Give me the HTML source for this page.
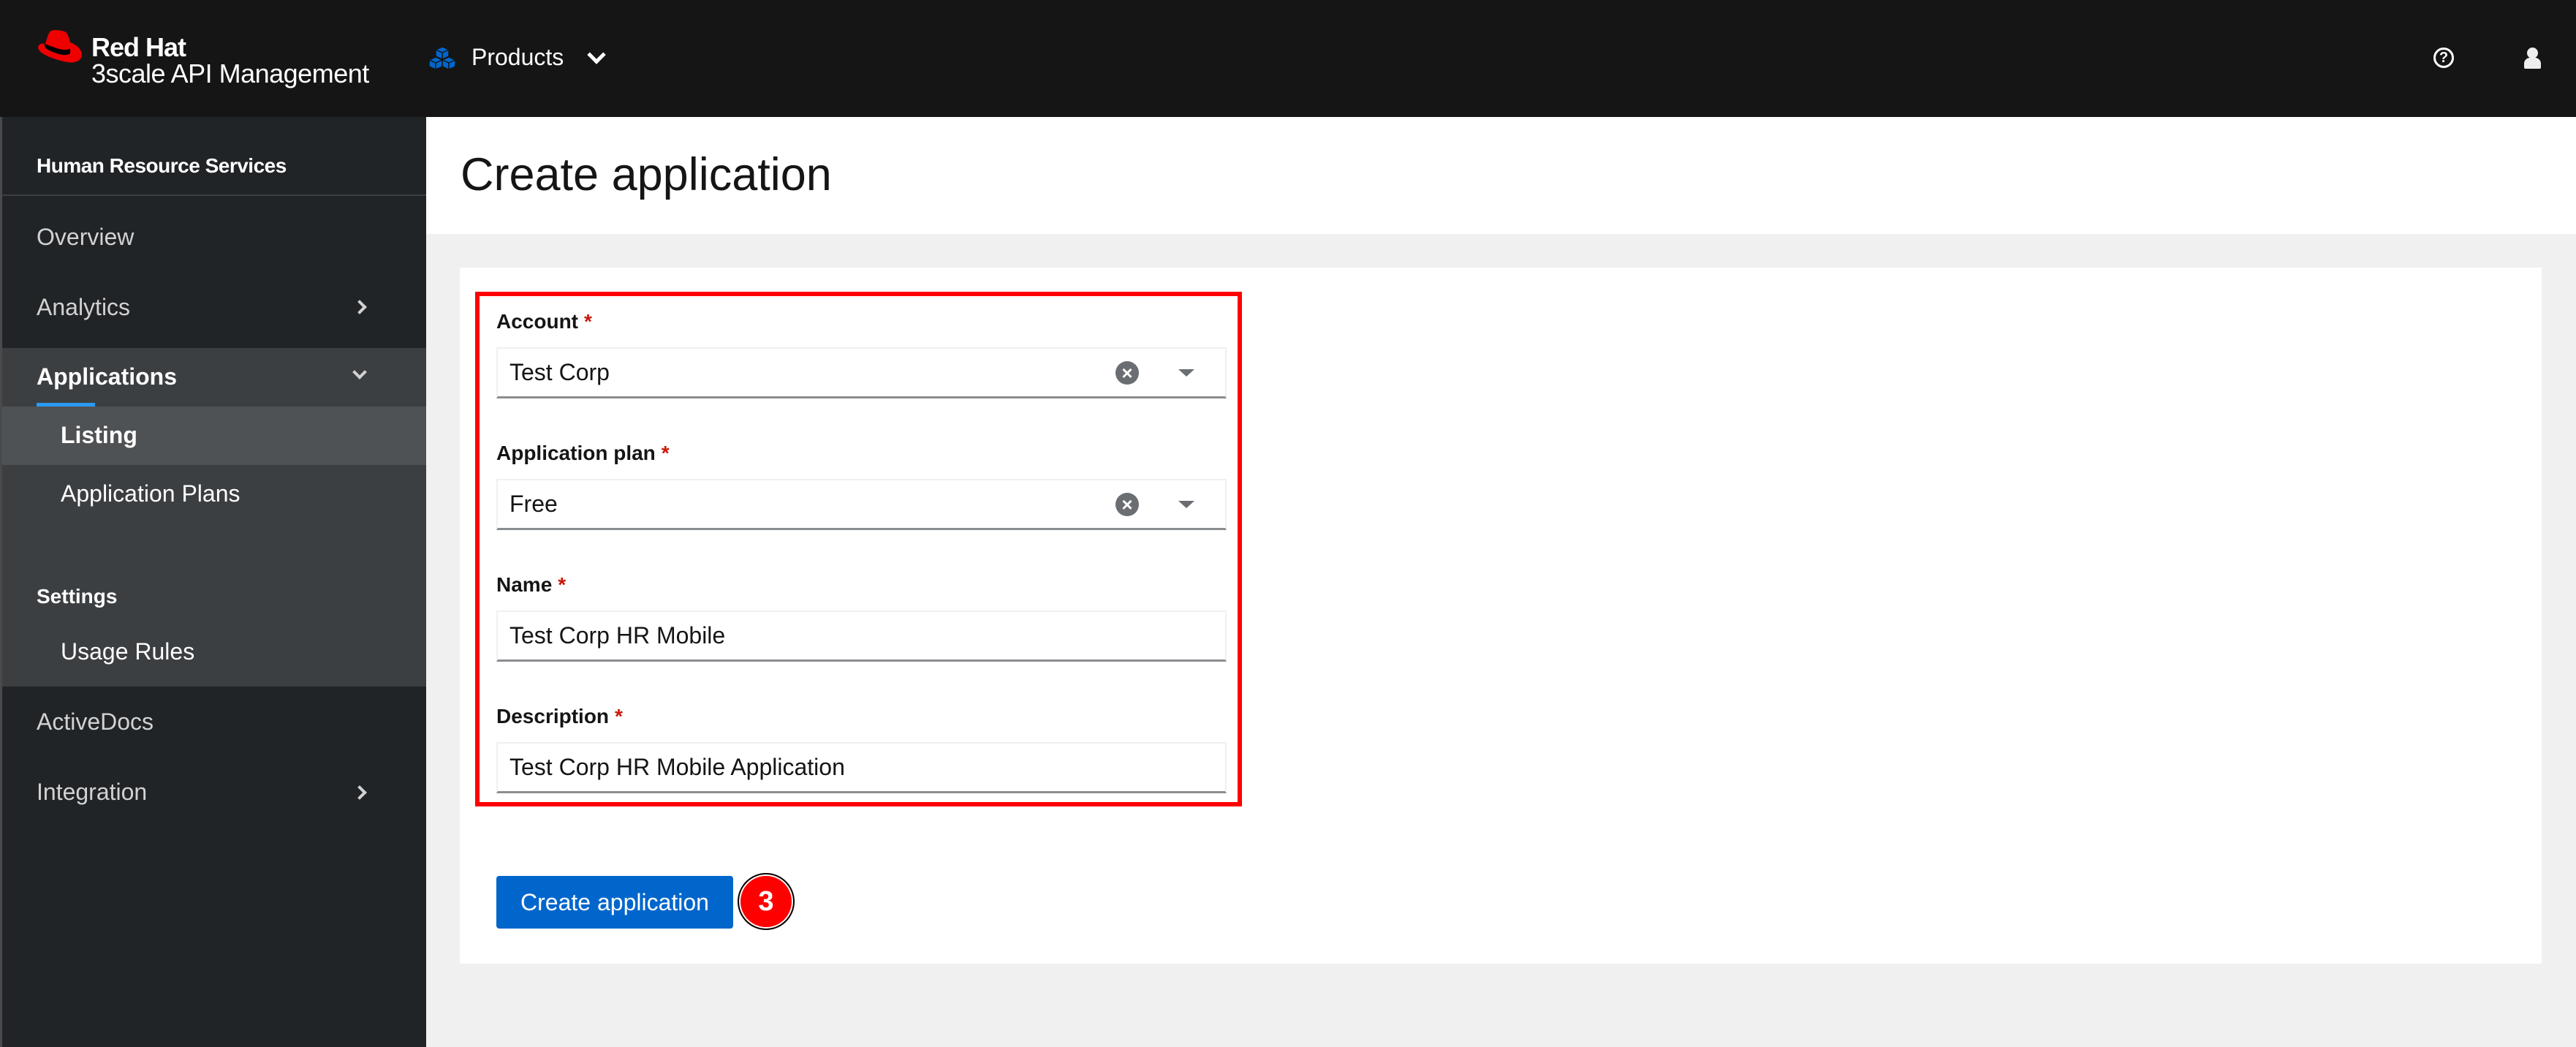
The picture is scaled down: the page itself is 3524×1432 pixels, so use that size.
<!DOCTYPE html>
<html><head><meta charset="utf-8"><style>
*{box-sizing:border-box;margin:0;padding:0}
body{width:3524px;height:1432px;overflow:hidden;background:#f0f0f0;font-family:"Liberation Sans",sans-serif;position:relative}
.a{position:absolute}
#hdr{left:0;top:0;width:3524px;height:160px;background:#151515}
#side{left:0;top:160px;width:583px;height:1272px;background:#212427;border-left:3px solid #4a4a4a}
.st{color:#d2d2d2;font-size:32px;left:50px}
.chev{left:490px;width:14px;height:14px;border-right:4px solid #d2d2d2;border-bottom:4px solid #d2d2d2}
.lbl{left:679px;font-size:28px;font-weight:bold;color:#151515}
.lbl span{color:#c9190b;margin-left:8px}
.inp{left:679px;width:999px;height:70px;border:2px solid #f0f0f0;border-bottom:3px solid #8a8d90;background:#fff;font-size:32px;color:#151515;padding-left:16px;line-height:64px}
.x{left:1526px;width:32px;height:32px;border-radius:50%;background:#6a6e73;color:#fff;font-size:26px;font-weight:bold;text-align:center;line-height:32px}
.car{left:1612px;width:0;height:0;border-left:11px solid transparent;border-right:11px solid transparent;border-top:10px solid #6a6e73}
</style></head><body>
<div id="hdr" class="a">
<svg class="a" style="left:50px;top:40px" width="64" height="48" viewBox="0 0 64 48">
<path d="M20 2 C26 0 34 2 38 3 C42 4 44 10 46 18 C52 20 62 26 62 35 C62 43 52 47 42 45 C30 43 8 36 3 28 C0 22 6 18 12 20 C14 14 16 4 20 2Z" fill="#e00"/>
<path d="M11 20 C10 24 12 27 22 31 C32 35 42 37 46 33 L46 26 C42 30 32 28 22 24 C16 22 12 20 11 20Z" fill="#000"/>
</svg>
<div class="a" style="left:125px;top:44px;color:#fff;font-size:36px;font-weight:bold;letter-spacing:-1px">Red Hat</div>
<div class="a" style="left:125px;top:80px;color:#fff;font-size:36px;letter-spacing:-0.5px">3scale API Management</div>
<svg class="a" style="left:585px;top:63px" width="40" height="33" viewBox="0 0 40 33">
<g stroke="#151515" stroke-width="1.5" stroke-linejoin="round">
<path d="M20 1 L29 5 L29 14 L20 18 L11 14 L11 5Z" fill="#06c"/><path d="M11 5 L20 9 L29 5 M20 9 L20 18" fill="none"/>
<path d="M11 15 L20 19 L20 28 L11 32 L2 28 L2 19Z" fill="#06c"/><path d="M2 19 L11 23 L20 19 M11 23 L11 32" fill="none"/>
<path d="M29 15 L38 19 L38 28 L29 32 L20 28 L20 19Z" fill="#06c"/><path d="M20 19 L29 23 L38 19 M29 23 L29 32" fill="none"/>
</g></svg>
<div class="a" style="left:645px;top:60px;color:#fff;font-size:32px">Products</div>
<div class="a" style="left:807px;top:66px;width:18px;height:18px;border-right:5px solid #fff;border-bottom:5px solid #fff;transform:rotate(45deg)"></div>
<div class="a" style="left:3329px;top:65px;width:28px;height:28px;border:3px solid #fff;border-radius:50%;color:#fff;font-size:20px;font-weight:bold;text-align:center;line-height:22px">?</div>
<div class="a" style="left:3457px;top:65px;width:15px;height:15px;border-radius:50%;background:#eee"></div>
<div class="a" style="left:3453px;top:79px;width:23px;height:15px;border-radius:8px 8px 2px 2px;background:#eee"></div>
</div>
<div id="side" class="a">
<div class="a" style="left:47px;top:51px;color:#fff;font-size:28px;font-weight:bold;letter-spacing:-0.5px">Human Resource Services</div>
<div class="a" style="left:0;top:106px;width:580px;height:2px;background:#3c3f42"></div>
<div class="a st" style="left:47px;top:146px">Overview</div>
<div class="a st" style="left:47px;top:242px">Analytics</div>
<div class="a chev" style="left:482px;top:253px;transform:rotate(-45deg)"></div>
<div class="a" style="left:0;top:316px;width:580px;height:463px;background:#3c3f42"></div>
<div class="a" style="left:47px;top:337px;color:#fff;font-size:32px;font-weight:bold">Applications</div>
<div class="a chev" style="left:482px;top:342px;transform:rotate(45deg)"></div>
<div class="a" style="left:47px;top:391px;width:80px;height:5px;background:#2b9af3"></div>
<div class="a" style="left:0;top:396px;width:580px;height:80px;background:#4f5255"></div>
<div class="a" style="left:80px;top:417px;color:#fff;font-size:32px;font-weight:bold">Listing</div>
<div class="a" style="left:80px;top:497px;color:#fff;font-size:32px">Application Plans</div>
<div class="a" style="left:47px;top:640px;color:#fff;font-size:28px;font-weight:bold">Settings</div>
<div class="a" style="left:80px;top:713px;color:#fff;font-size:32px">Usage Rules</div>
<div class="a st" style="left:47px;top:809px">ActiveDocs</div>
<div class="a st" style="left:47px;top:905px">Integration</div>
<div class="a chev" style="left:482px;top:917px;transform:rotate(-45deg)"></div>
</div>
<div class="a" style="left:583px;top:160px;width:2941px;height:160px;background:#fff"></div>
<div class="a" style="left:630px;top:203px;font-size:63px;color:#151515">Create application</div>
<div class="a" style="left:629px;top:366px;width:2848px;height:952px;background:#fff"></div>
<div class="a" style="left:650px;top:399px;width:1049px;height:704px;border:6px solid #f00"></div>
<div class="a lbl" style="top:424px">Account<span>*</span></div>
<div class="a inp" style="top:475px">Test Corp</div>
<div class="a x" style="top:494px">×</div><div class="a car" style="top:505px"></div>
<div class="a lbl" style="top:604px">Application plan<span>*</span></div>
<div class="a inp" style="top:655px">Free</div>
<div class="a x" style="top:674px">×</div><div class="a car" style="top:685px"></div>
<div class="a lbl" style="top:784px">Name<span>*</span></div>
<div class="a inp" style="top:835px">Test Corp HR Mobile</div>
<div class="a lbl" style="top:964px">Description<span>*</span></div>
<div class="a inp" style="top:1015px">Test Corp HR Mobile Application</div>
<div class="a" style="left:679px;top:1198px;width:324px;height:72px;background:#06c;border-radius:4px;color:#fff;font-size:32px;text-align:center;line-height:72px">Create application</div>
<div class="a" style="left:1009px;top:1194px;width:78px;height:78px;border-radius:50%;background:#f00;border:2px solid #000;box-shadow:inset 0 0 0 2px #fff;color:#fff;font-size:38px;font-weight:bold;text-align:center;line-height:74px">3</div>
</body></html>
